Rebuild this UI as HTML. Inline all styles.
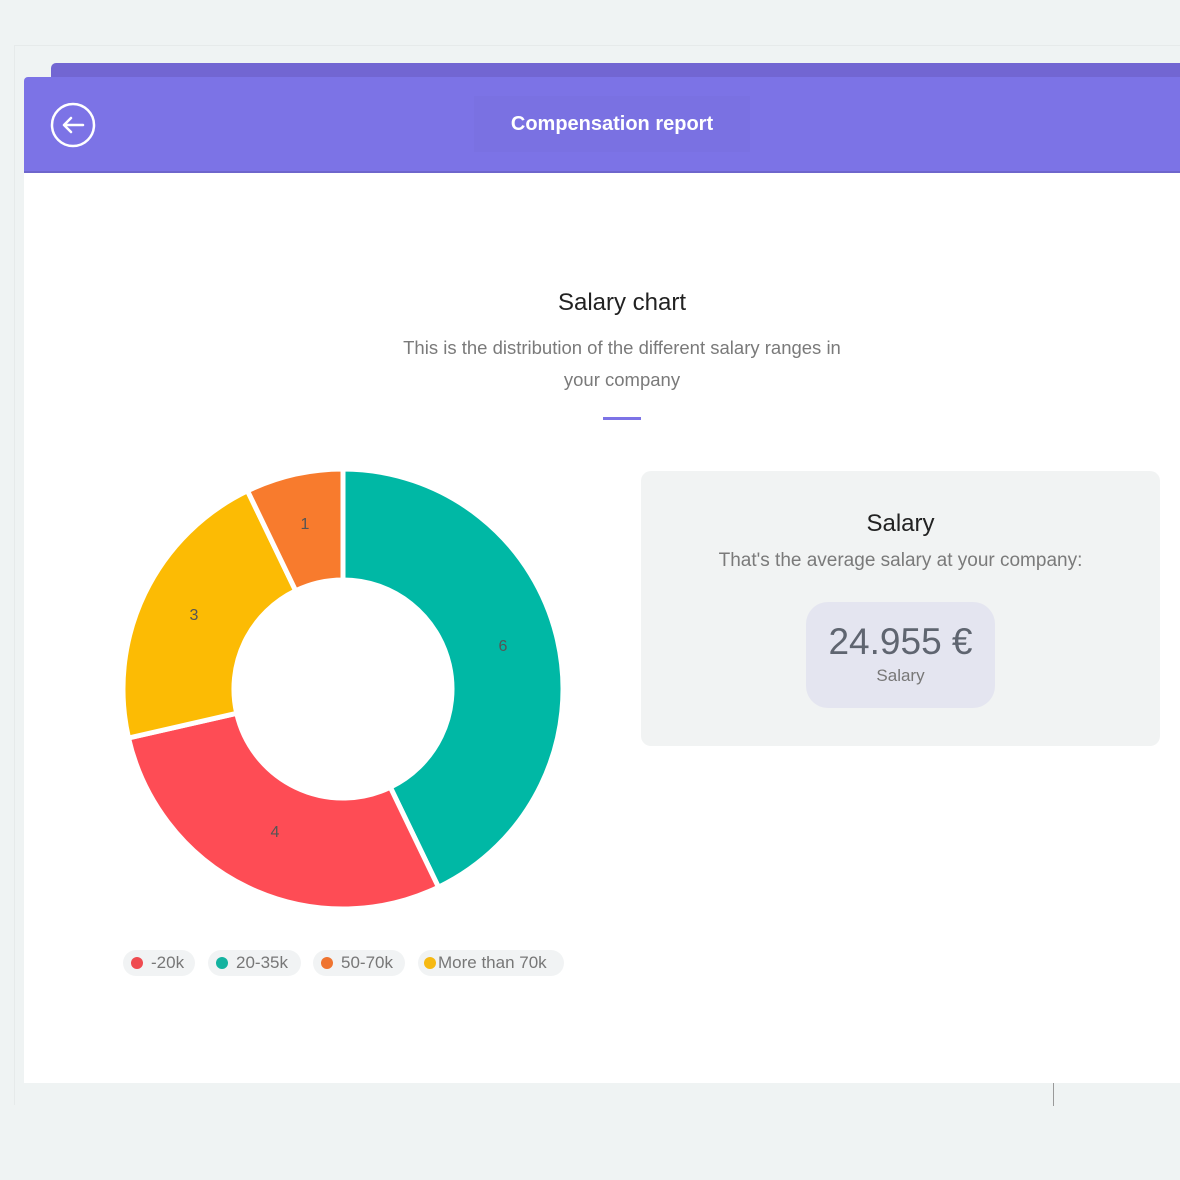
<!DOCTYPE html>
<html><head><meta charset="utf-8"><style>
*{margin:0;padding:0;box-sizing:border-box}
body{width:1180px;height:1180px;background:#eff3f3;position:relative;overflow:hidden;font-family:"Liberation Sans",sans-serif}
.abs{position:absolute}
.c{text-align:center}
.pill{position:absolute;top:950px;height:26px;border-radius:13px;background:#f1f3f4;font-size:17px;color:#777;line-height:26px;padding-left:8px}
.pill i{display:inline-block;width:12px;height:12px;border-radius:50%;vertical-align:-1px;margin-right:8px}
</style></head><body>
<div class="abs" style="left:14px;top:45px;width:1166px;height:1060px;border-left:1px solid #e6eaea;border-top:1px solid #e6eaea"></div>
<div class="abs" style="left:51px;top:63px;width:1129px;height:20px;background:#7266d2;border-radius:5px 0 0 0"></div>
<div class="abs" style="left:24px;top:77px;width:1156px;height:96px;background:#7c73e6;border-radius:4px 0 0 0"></div>
<div class="abs" style="left:24px;top:172px;width:1156px;height:911px;background:#fff"></div>
<div class="abs" style="left:24px;top:171px;width:1156px;height:2px;background:#6e66cc"></div>
<div class="abs" style="left:1053px;top:1083px;width:1px;height:23px;background:#999"></div>
<svg class="abs" style="left:50px;top:102px" width="48" height="48" viewBox="0 0 48 48"><circle cx="23" cy="23" r="21" fill="none" stroke="#fff" stroke-width="2.5"/><path d="M33 23H14M21 16l-7 7 7 7" fill="none" stroke="#fff" stroke-width="2.5" stroke-linecap="round" stroke-linejoin="round"/></svg>
<div class="abs c" style="left:474px;top:96px;width:276px;height:56px;background:#7a71e2;color:#fff;font-weight:bold;font-size:20px;line-height:56px">Compensation report</div>
<div class="abs c" style="left:322px;top:289px;width:600px;font-size:24px;color:#222">Salary chart</div>
<div class="abs c" style="left:377px;top:332px;width:490px;font-size:18.5px;color:#7a7a7a;line-height:32px">This is the distribution of the different salary ranges in<br>your company</div>
<div class="abs" style="left:603px;top:417px;width:38px;height:3px;background:#7c73e6"></div>
<svg class="abs" style="left:0;top:0" width="600" height="940" viewBox="0 0 600 940">
<g stroke="#fff" stroke-width="5" stroke-linejoin="round">
<path fill="#00b8a5" d="M343,469 A220,220 0 0 1 438.5,887.2 L390.3,787.2 A109,109 0 0 0 343,580 Z"/>
<path fill="#fe4c55" d="M438.5,887.2 A220,220 0 0 1 128.5,738 L236.7,713.3 A109,109 0 0 0 390.3,787.2 Z"/>
<path fill="#fcbb04" d="M128.5,738 A220,220 0 0 1 247.5,490.8 L295.7,590.8 A109,109 0 0 0 236.7,713.3 Z"/>
<path fill="#f87b2d" d="M247.5,490.8 A220,220 0 0 1 343,469 L343,580 A109,109 0 0 0 295.7,590.8 Z"/>
</g>
<g font-family="Liberation Sans,sans-serif" font-size="16" fill="#555" text-anchor="middle">
<text x="503" y="651">6</text><text x="275" y="837">4</text><text x="194" y="620">3</text><text x="305" y="529">1</text></g>
</svg>
<div class="pill" style="left:123px;width:72px"><i style="background:#ef4b50"></i>-20k</div>
<div class="pill" style="left:208px;width:93px"><i style="background:#14b3a0"></i>20-35k</div>
<div class="pill" style="left:313px;width:92px"><i style="background:#ef7430"></i>50-70k</div>
<div class="pill" style="left:418px;width:146px;padding-left:6px"><i style="background:#f6b913;margin-right:2px"></i>More than 70k</div>
<div class="abs" style="left:641px;top:471px;width:519px;height:275px;background:#f1f3f3;border-radius:10px"></div>
<div class="abs c" style="left:641px;top:510px;width:519px;font-size:24px;color:#222">Salary</div>
<div class="abs c" style="left:641px;top:550px;width:519px;font-size:19px;color:#7a7a7a">That's the average salary at your company:</div>
<div class="abs c" style="left:806px;top:602px;width:189px;height:106px;background:#e4e5f0;border-radius:22px">
<div style="font-size:37px;color:#5f6570;margin-top:19px">24.955 €</div>
<div style="font-size:17px;color:#777;margin-top:3px">Salary</div></div>
</body></html>
